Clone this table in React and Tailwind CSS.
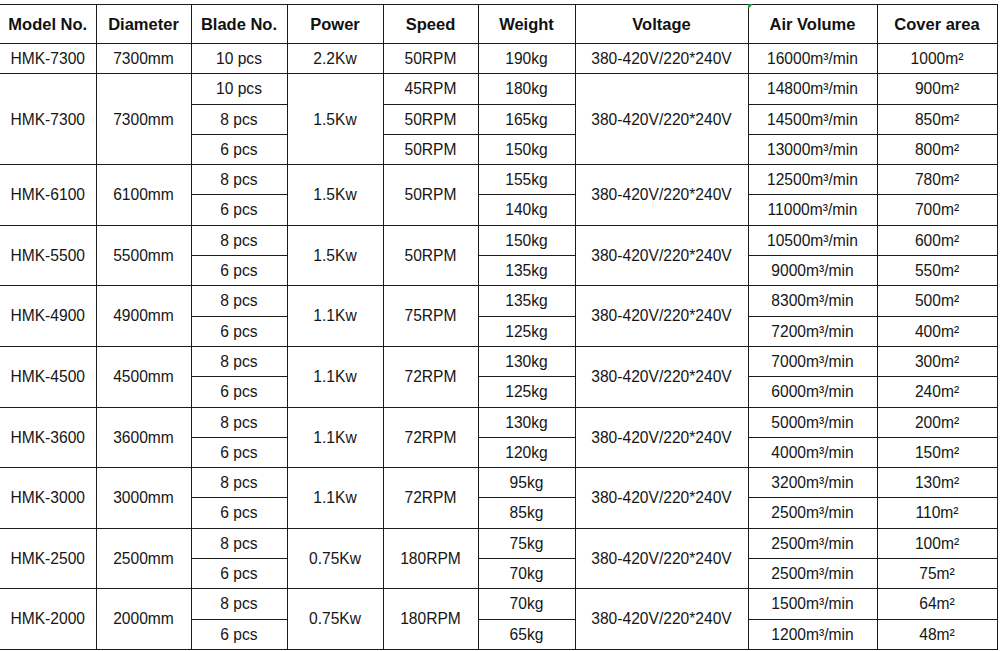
import React from "react";

const V = "380-420V/220*240V";
const groups = [
  { m: "HMK-7300", d: "7300mm", p: "2.2Kw", rows: [["10 pcs", "50RPM", "190kg", "16000m³/min", "1000m²"]], speedMerged: false },
  {
    m: "HMK-7300", d: "7300mm", p: "1.5Kw", speedMerged: false,
    rows: [
      ["10 pcs", "45RPM", "180kg", "14800m³/min", "900m²"],
      ["8 pcs", "50RPM", "165kg", "14500m³/min", "850m²"],
      ["6 pcs", "50RPM", "150kg", "13000m³/min", "800m²"],
    ],
  },
  { m: "HMK-6100", d: "6100mm", p: "1.5Kw", s: "50RPM", speedMerged: true, rows: [["8 pcs", "", "155kg", "12500m³/min", "780m²"], ["6 pcs", "", "140kg", "11000m³/min", "700m²"]] },
  { m: "HMK-5500", d: "5500mm", p: "1.5Kw", s: "50RPM", speedMerged: true, rows: [["8 pcs", "", "150kg", "10500m³/min", "600m²"], ["6 pcs", "", "135kg", "9000m³/min", "550m²"]] },
  { m: "HMK-4900", d: "4900mm", p: "1.1Kw", s: "75RPM", speedMerged: true, rows: [["8 pcs", "", "135kg", "8300m³/min", "500m²"], ["6 pcs", "", "125kg", "7200m³/min", "400m²"]] },
  { m: "HMK-4500", d: "4500mm", p: "1.1Kw", s: "72RPM", speedMerged: true, rows: [["8 pcs", "", "130kg", "7000m³/min", "300m²"], ["6 pcs", "", "125kg", "6000m³/min", "240m²"]] },
  { m: "HMK-3600", d: "3600mm", p: "1.1Kw", s: "72RPM", speedMerged: true, rows: [["8 pcs", "", "130kg", "5000m³/min", "200m²"], ["6 pcs", "", "120kg", "4000m³/min", "150m²"]] },
  { m: "HMK-3000", d: "3000mm", p: "1.1Kw", s: "72RPM", speedMerged: true, rows: [["8 pcs", "", "95kg", "3200m³/min", "130m²"], ["6 pcs", "", "85kg", "2500m³/min", "110m²"]] },
  { m: "HMK-2500", d: "2500mm", p: "0.75Kw", s: "180RPM", speedMerged: true, rows: [["8 pcs", "", "75kg", "2500m³/min", "100m²"], ["6 pcs", "", "70kg", "2500m³/min", "75m²"]] },
  { m: "HMK-2000", d: "2000mm", p: "0.75Kw", s: "180RPM", speedMerged: true, rows: [["8 pcs", "", "70kg", "1500m³/min", "64m²"], ["6 pcs", "", "65kg", "1200m³/min", "48m²"]] },
];

const cell = "border border-[#1a1a1a] text-center align-middle p-0 whitespace-nowrap";
const first = "border-y border-r border-[#1a1a1a] border-l-0 text-center align-middle p-0 whitespace-nowrap";

export default function App() {
  return (
    <div className="w-[1000px] h-[651px] bg-white pt-[4px] overflow-hidden" style={{ fontFamily: '"Liberation Sans", Arial, sans-serif' }}>
      <div className="relative w-[997px]">
        <table className="w-[997px] table-fixed border-collapse text-[15.6px] text-[#161616]">
          <colgroup>
            <col className="w-[96px]" />
            <col className="w-[95px]" />
            <col className="w-[96px]" />
            <col className="w-[96px]" />
            <col className="w-[95px]" />
            <col className="w-[97px]" />
            <col className="w-[173px]" />
            <col className="w-[129px]" />
            <col className="w-[120px]" />
          </colgroup>
          <thead>
            <tr className="h-[39px] text-[16.5px] font-bold text-[#111]">
              <th className={first}>Model No.</th>
              <th className={cell}>Diameter</th>
              <th className={cell}>Blade No.</th>
              <th className={cell}>Power</th>
              <th className={cell}>Speed</th>
              <th className={cell}>Weight</th>
              <th className={cell}>Voltage</th>
              <th className={cell}>Air Volume</th>
              <th className={cell}>Cover area</th>
            </tr>
          </thead>
          <tbody>
            {groups.map((g, gi) =>
              g.rows.map((r, ri) => {
                const n = g.rows.length;
                return (
                  <tr key={gi + "-" + ri} className="h-[30.3px]">
                    {ri === 0 && (
                      <>
                        <td rowSpan={n} className={first}>{g.m}</td>
                        <td rowSpan={n} className={cell}>{g.d}</td>
                      </>
                    )}
                    <td className={cell}>{r[0]}</td>
                    {ri === 0 && <td rowSpan={n} className={cell}>{g.p}</td>}
                    {g.speedMerged ? (
                      ri === 0 && <td rowSpan={n} className={cell}>{g.s}</td>
                    ) : (
                      <td className={cell}>{r[1]}</td>
                    )}
                    <td className={cell}>{r[2]}</td>
                    {ri === 0 && <td rowSpan={n} className={cell}>{V}</td>}
                    <td className={cell}>{r[3]}</td>
                    <td className={cell}>{r[4]}</td>
                  </tr>
                );
              })
            )}
          </tbody>
        </table>
        <svg className="absolute left-[748px] top-0" width="5" height="5" viewBox="0 0 5 5">
          <polygon points="0,0 5,0 0,5" fill="#1e9b3c" />
        </svg>
      </div>
    </div>
  );
}
